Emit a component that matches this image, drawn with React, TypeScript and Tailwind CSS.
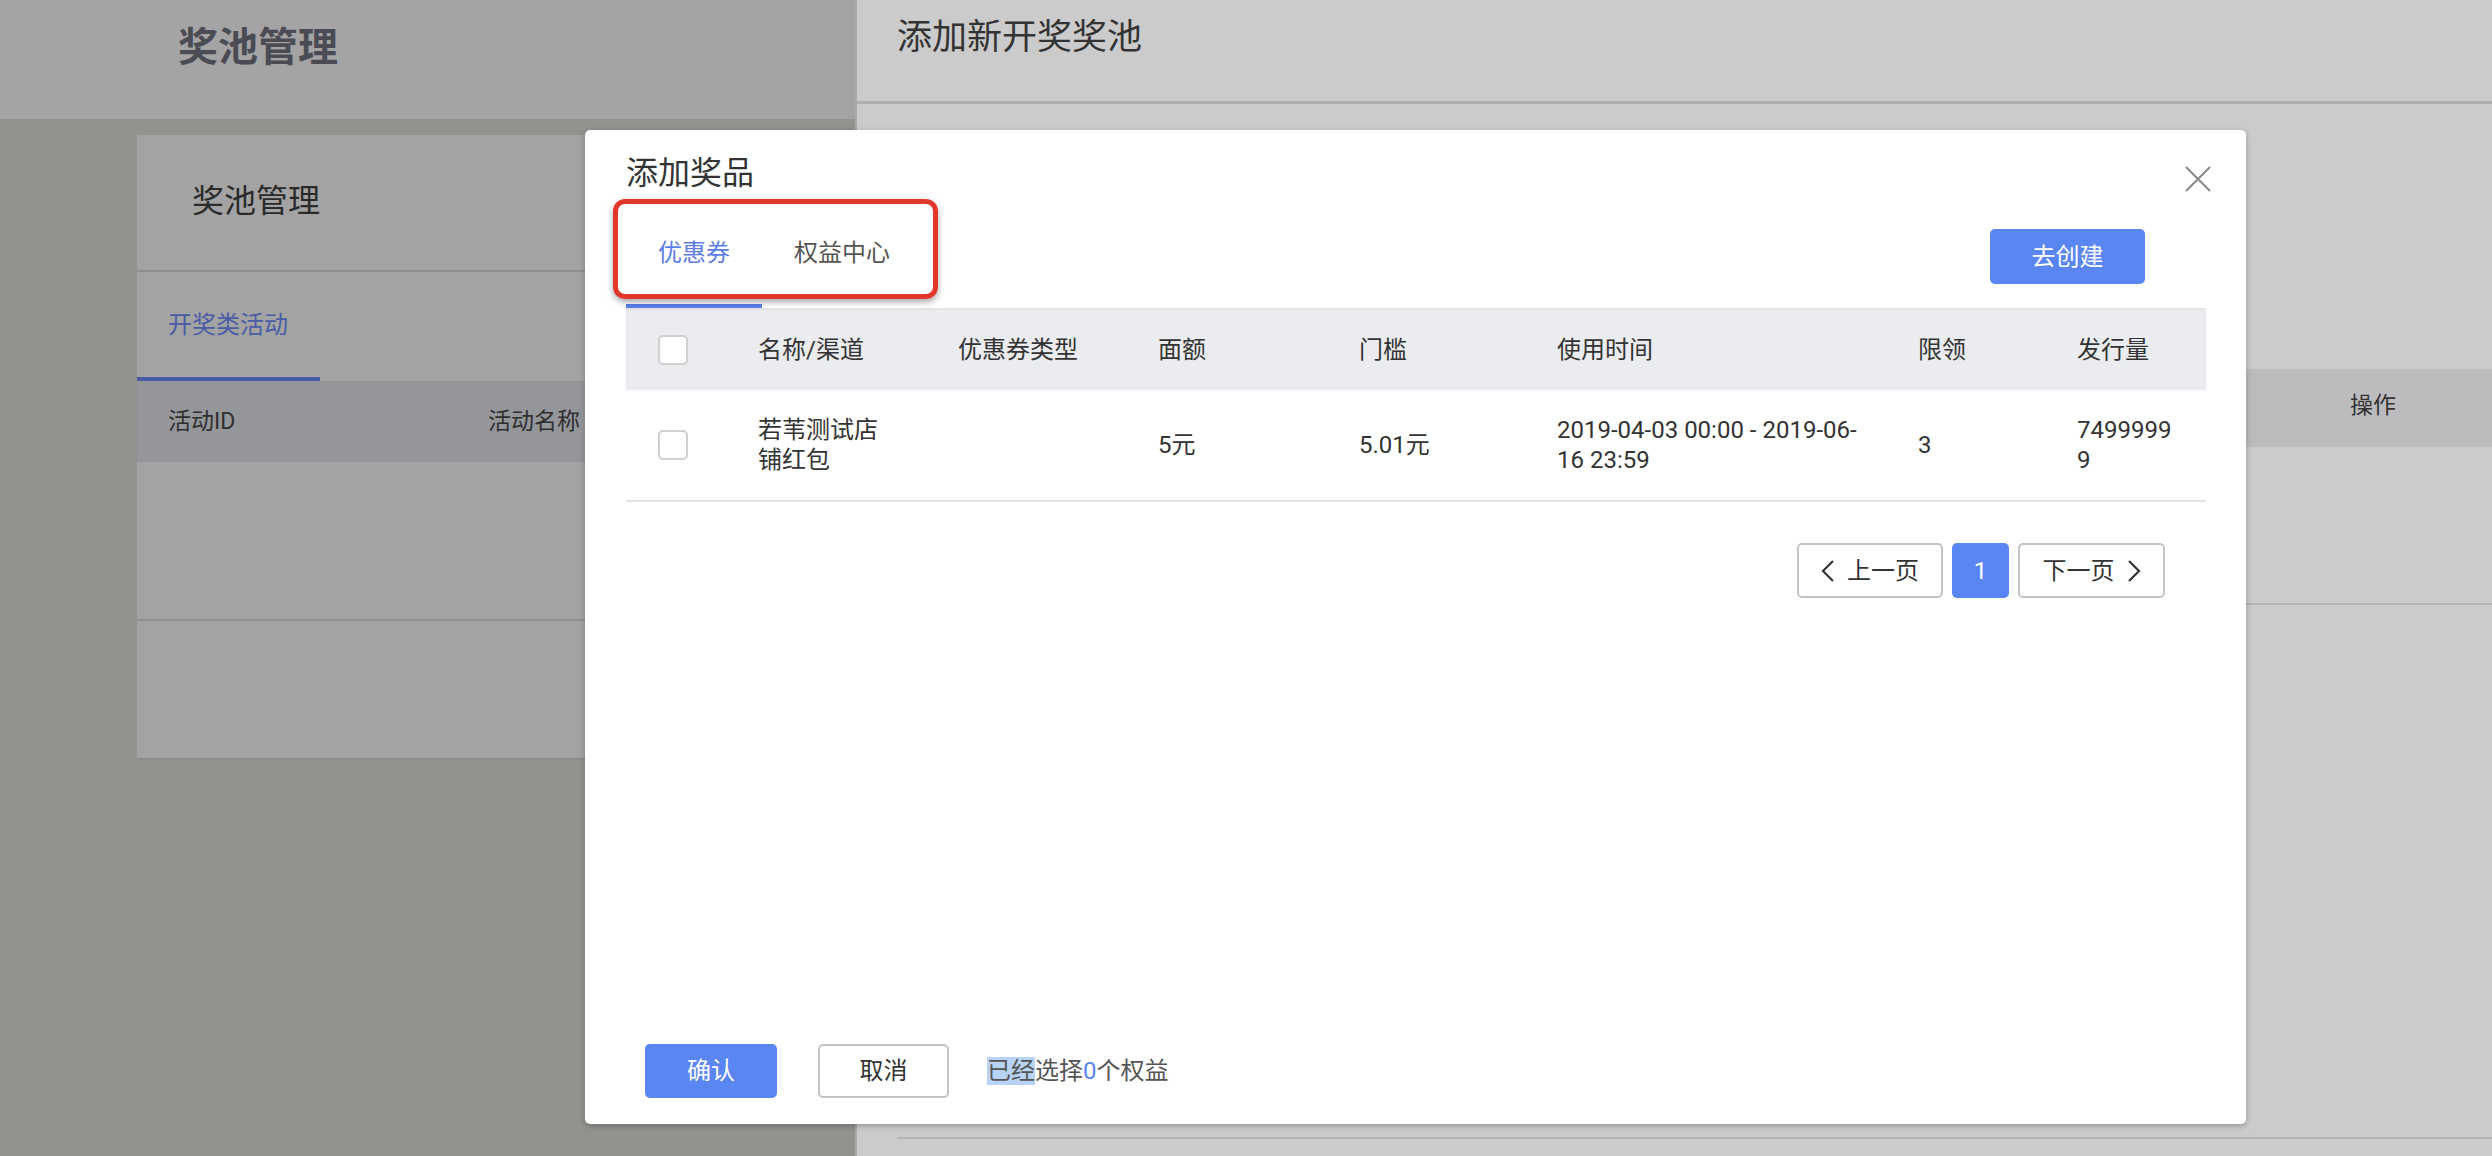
import React from 'react';

const BLUE = '#5a86f3';

const Checkbox: React.FC = () => (
  <span className="block w-[30px] h-[30px] rounded-[5px] border-2 border-[#cfcfcf] bg-white" />
);

const columns = ['名称/渠道', '优惠券类型', '面额', '门槛', '使用时间', '限领', '发行量'];

const rows = [
  {
    name: ['若苇测试店', '铺红包'],
    type: '',
    face: '5元',
    threshold: '5.01元',
    time: ['2019-04-03 00:00 - 2019-06-', '16 23:59'],
    limit: '3',
    issued: ['7499999', '9'],
  },
];

const gridCols = 'grid grid-cols-[132px_200px_200px_201px_198px_361px_159px_1fr]';

const PrizeTable: React.FC = () => (
  <div className="text-[24px] text-[#333]">
    <div className={`${gridCols} h-[82px] items-center bg-[#ebecf0] border-t-2 border-[#e2e3e7]`}>
      <div className="pl-[32px]">
        <Checkbox />
      </div>
      {columns.map(c => (
        <div key={c}>{c}</div>
      ))}
    </div>
    {rows.map((r, i) => (
      <div key={i} className={`${gridCols} h-[112px] items-center leading-[30px] border-b-2 border-[#e4e4e4]`}>
        <div className="pl-[32px]">
          <Checkbox />
        </div>
        <div>
          {r.name[0]}
          <br />
          {r.name[1]}
        </div>
        <div>{r.type}</div>
        <div>{r.face}</div>
        <div>{r.threshold}</div>
        <div>
          {r.time[0]}
          <br />
          {r.time[1]}
        </div>
        <div>{r.limit}</div>
        <div>
          {r.issued[0]}
          <br />
          {r.issued[1]}
        </div>
      </div>
    ))}
  </div>
);

const Chevron: React.FC<{ dir: 'left' | 'right' }> = ({ dir }) => (
  <svg width="14" height="24" viewBox="0 0 14 24" fill="none" stroke="#333" strokeWidth="2.2">
    {dir === 'left' ? <path d="M12 2 L2 12 L12 22" /> : <path d="M2 2 L12 12 L2 22" />}
  </svg>
);

const Pagination: React.FC = () => (
  <div className="flex justify-end gap-[9px] pr-[81px] mt-[41px] text-[24px] text-[#333]">
    <button className="flex items-center justify-center gap-[12px] w-[146px] h-[55px] rounded-[5px] border-2 border-[#c4c4c4] bg-white">
      <Chevron dir="left" />
      <span>上一页</span>
    </button>
    <button className="w-[57px] h-[55px] rounded-[5px] text-white" style={{ backgroundColor: BLUE }}>
      1
    </button>
    <button className="flex items-center justify-center gap-[12px] w-[147px] h-[55px] rounded-[5px] border-2 border-[#c4c4c4] bg-white">
      <span>下一页</span>
      <Chevron dir="right" />
    </button>
  </div>
);

const AddPrizeModal: React.FC = () => (
  <div className="absolute left-[585px] top-[130px] w-[1661px] h-[994px] bg-white rounded-[5px] shadow-[0_2px_6px_rgba(0,0,0,0.25)] flex flex-col">
    {/* title */}
    <div className="flex items-start justify-between pl-[41px] pr-[35px] pt-[24px]">
      <h3 className="text-[32px] leading-[38px] text-[#333]">添加奖品</h3>
      <svg className="mt-[12px]" width="26" height="26" viewBox="0 0 26 26" stroke="#888" strokeWidth="2" fill="none">
        <path d="M1 1 L25 25 M25 1 L1 25" />
      </svg>
    </div>

    {/* tabs */}
    <div className="flex items-start pl-[41px]">
      <div className="relative h-[116px] pt-[46px] px-[32px] text-[24px] leading-[30px]" style={{ color: '#5b7ee6' }}>
        优惠券
        <span className="absolute left-0 right-0 bottom-0 h-[4px] bg-[#5b7ee6]" />
      </div>
      <div className="h-[116px] pt-[46px] px-[32px] text-[24px] leading-[30px] text-[#555]">权益中心</div>
      <button
        className="ml-auto mr-[101px] mt-[37px] w-[155px] h-[55px] rounded-[5px] text-white text-[24px]"
        style={{ backgroundColor: BLUE }}
      >
        去创建
      </button>
    </div>

    <div className="pl-[41px] pr-[40px]">
      <PrizeTable />
    </div>

    <Pagination />

    <div className="flex-1" />

    {/* footer */}
    <div className="flex items-center gap-[41px] pl-[60px] pb-[26px] text-[24px]">
      <button className="w-[132px] h-[54px] rounded-[5px] text-white" style={{ backgroundColor: BLUE }}>
        确认
      </button>
      <button className="w-[131px] h-[54px] rounded-[5px] border-2 border-[#c4c4c4] bg-white text-[#333]">
        取消
      </button>
      <p className="-ml-[3px] text-[#555]">
        <span className="bg-[#b7d3f7]">已经</span>选择<span style={{ color: BLUE }}>0</span>个权益
      </p>
    </div>

    {/* red annotation box */}
    <div className="absolute left-[28px] top-[69px] w-[325px] h-[100px] rounded-[12px] border-[5px] border-[#e2382c] shadow-[0_3px_6px_rgba(0,0,0,0.35)]" />
  </div>
);

const LeftPage: React.FC = () => (
  <div className="w-[855px] h-full bg-[#92928e] flex flex-col">
    <div className="h-[119px] bg-[#a4a4a4] pl-[178px] pt-[25px]">
      <h1 className="text-[40px] leading-[46px] font-bold text-[#4b4b53]">奖池管理</h1>
    </div>
    <div className="pl-[137px] pt-[16px]">
      <div className="h-[625px] bg-[#a3a3a3] border-b-2 border-[#8c8c8c]">
        <div className="h-[137px] border-b-2 border-[#8e8e8e] pl-[55px] pt-[47px] text-[32px] leading-[38px] text-[#2a2a2a]">
          奖池管理
        </div>
        <div className="relative h-[110px] pl-[31px] pt-[38px] text-[24px] leading-[30px] text-[#4a5ca6] border-b border-[#959595]">
          开奖类活动
          <span className="absolute left-0 bottom-0 w-[183px] h-[4px] bg-[#4a5ca6]" />
        </div>
        <div className="h-[80px] bg-[#95969a] flex items-center text-[23px] text-[#2e2e2e]">
          <span className="pl-[31px] w-[351px]">活动ID</span>
          <span>活动名称</span>
        </div>
        <div className="h-[159px] border-b-2 border-[#8e8e8e]" />
      </div>
    </div>
  </div>
);

const RightPage: React.FC = () => (
  <div className="flex-1 h-full bg-[#cbcbcb] border-l-2 border-[#a9a9a9] flex flex-col">
    <div className="h-[104px] border-b-[3px] border-[#afafaf] pl-[40px] pt-[18px]">
      <h2 className="text-[35px] leading-[40px] text-[#333]">添加新开奖奖池</h2>
    </div>
    <div className="ml-[40px] mt-[265px] h-[78px] bg-[#bcbcbf] flex items-center justify-end text-[23px] text-[#333]">
      <span className="w-[238px] text-center -mt-[4px]">操作</span>
    </div>
    <div className="ml-[40px] h-[158px] border-b-2 border-[#b3b3b3]" />
    <div className="ml-[40px] mt-[532px] border-b-2 border-[#b3b3b3]" />
  </div>
);

export default function App() {
  return (
    <div className="relative flex w-[2492px] h-[1156px] overflow-hidden font-['Roboto','Noto_Sans_CJK_SC',sans-serif]">
      <LeftPage />
      <RightPage />
      <AddPrizeModal />
    </div>
  );
}
